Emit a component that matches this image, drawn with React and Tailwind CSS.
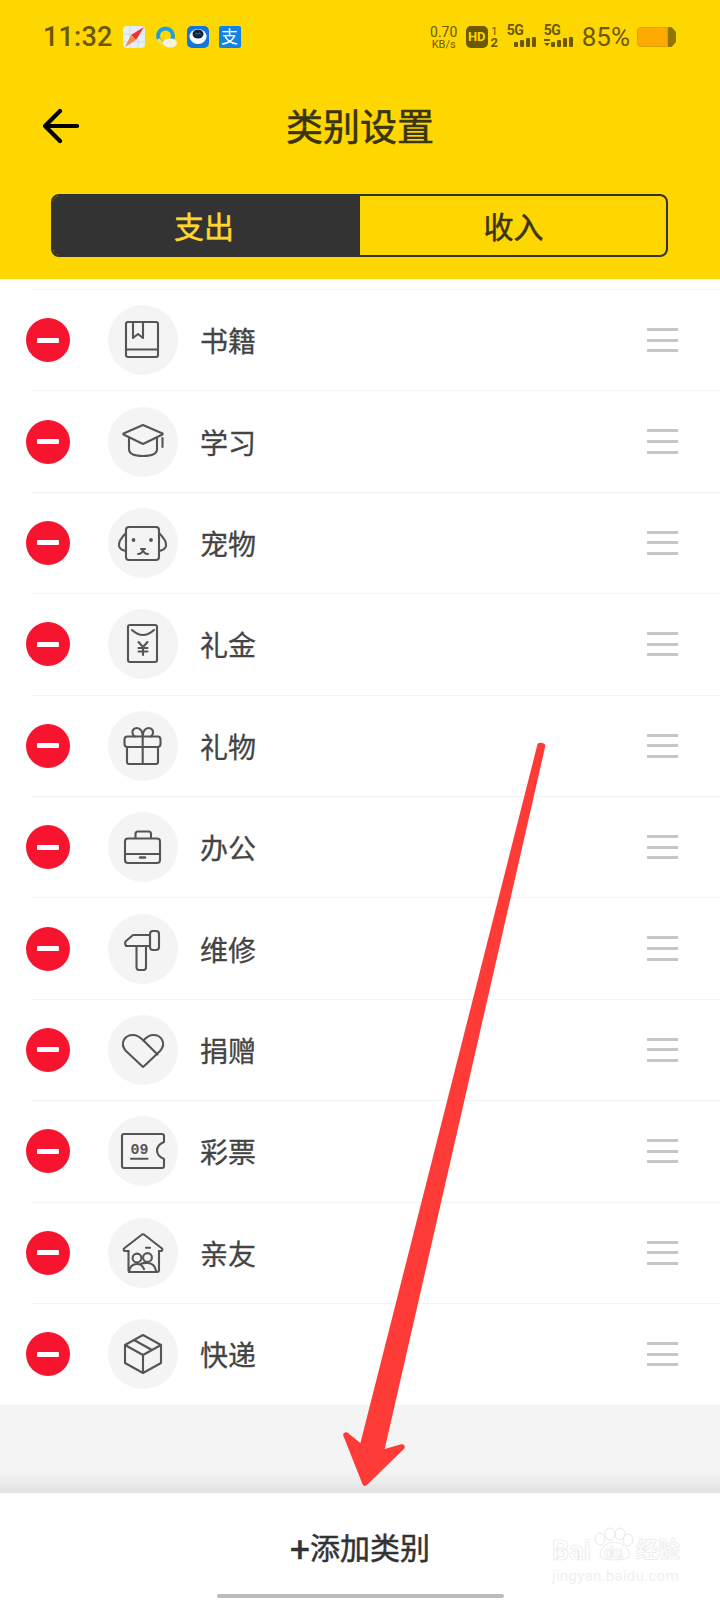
const FONT = "font-['Roboto','Noto_Sans_CJK_SC',sans-serif]";

const icons = {
  book: (
    <>
      <rect x="18" y="17" width="32" height="35" rx="2" />
      <path d="M18 44.5H50M25 17V33L30 29L35 33V17" />
    </>
  ),
  cap: (
    <>
      <path d="M35 18L15.5 26.5Q15 27 15.5 27.5L35 37L54.5 27.5Q55 27 54.5 26.5Z" />
      <path d="M21 31V42Q21 49 35 49Q49 49 49 42V31M54.5 31V40" />
    </>
  ),
  dog: (
    <>
      <rect x="18" y="19" width="33" height="33" rx="3" />
      <path d="M18 25Q10 33 11 38Q12 42 18 43M51 25Q59 33 58 38Q57 42 51 43" />
      <path d="M30 46Q34 46 35 42Q36 46 40 46" />
      <path d="M33 41H37" />
      <circle cx="25.5" cy="32" r="1.9" fill="#555" stroke="none" />
      <circle cx="43" cy="32" r="1.9" fill="#555" stroke="none" />
    </>
  ),
  packet: (
    <>
      <rect x="20" y="16" width="29" height="37" rx="2" />
      <path d="M24 21Q35 31 46 21" />
      <path d="M30.5 33L35 38L39.5 33M35 38V46M30.5 39H39.5M30.5 42.5H39.5" />
    </>
  ),
  gift: (
    <>
      <rect x="16.5" y="25.5" width="36" height="10.5" rx="3" />
      <path d="M19 36V51Q19 53 21 53H48Q50 53 50 51V36M34.7 25.5V53" />
      <path d="M34.7 25.5C34.7 20 32 17 29 17C25.5 17 24 20 24.5 22C25 24 26 25.5 27 25.5M34.7 25.5C34.7 20 37.5 17 40.5 17C44 17 45.5 20 45 22C44.5 24 43.5 25.5 42.5 25.5" />
    </>
  ),
  case: (
    <>
      <rect x="17" y="26.5" width="35" height="24.5" rx="3" />
      <path d="M27.5 26V22Q27.5 19.5 30 19.5H40.5Q43 19.5 43 22V26M17 42H52" />
      <path d="M32 45.5H37" strokeWidth="2.4" />
    </>
  ),
  hammer: (
    <>
      <path d="M42 21H25L17.5 27.5Q16.5 29 18 32H42Z" />
      <rect x="42" y="17" width="9" height="19" rx="3" />
      <path d="M28.5 32V53Q28.5 56 31 56H35.5Q38 56 38 53V32" />
    </>
  ),
  heart: (
    <>
      <path d="M35 52L18 36C11 28 17 20 25 20C30 20 33 23 35.5 25.5C38 22.5 41 20 45.5 20C53 20 59 28 52 36L41 46.5Q37.5 50 35 52Z" />
      <path d="M35.5 25.5L49.5 39.5" />
    </>
  ),
  ticket: (
    <>
      <path d="M16 18H54Q56 18 56 20V26Q49 29 49 34.5Q49 40 56 43V50Q56 52 54 52H16Q14 52 14 50V20Q14 18 16 18Z" />
      <path d="M23 42.8H39.5" />
      <text x="22.5" y="38" fill="#555" stroke="none" fontSize="15" fontWeight="700" fontFamily="'Liberation Mono', monospace">09</text>
    </>
  ),
  house: (
    <>
      <path d="M20.5 33V52Q20.5 54 22.5 54H49Q51 54 51 52V33" />
      <path d="M20.5 33H16.5Q15 32 16 30.5L34 16.5Q35 16 36 16.5L54 30.5Q55 32 53.5 33H51" />
      <path d="M38 29.7H42" />
      <circle cx="29" cy="40" r="4.4" />
      <circle cx="39.5" cy="39.5" r="4.4" />
      <path d="M21 54Q22 46 29 46Q34 46 36 51M33 46Q36 44.5 39.5 45Q47 45.5 48 53" />
    </>
  ),
  box: (
    <>
      <path d="M35 16L53 26V44L35 54L17 44V26Z" />
      <path d="M17 26L35 36L53 26M35 36V54M26 21L44 31" />
    </>
  ),
};

const rows = [
  ["书籍", "book"],
  ["学习", "cap"],
  ["宠物", "dog"],
  ["礼金", "packet"],
  ["礼物", "gift"],
  ["办公", "case"],
  ["维修", "hammer"],
  ["捐赠", "heart"],
  ["彩票", "ticket"],
  ["亲友", "house"],
  ["快递", "box"],
];

function Signal({ arrows }) {
  return (
    <div className="relative h-[24px] w-[30px]">
      <span className="absolute left-0 top-[-2px] text-[14px] font-bold leading-[14px] tracking-[-0.5px] text-[#6b5800]">5G</span>
      <svg viewBox="0 0 30 24" className="absolute inset-0 h-[24px] w-[30px]" fill="#6b5800">
        {arrows && <path d="M0 14H6V16H0ZM0 18H6L3 21Z" />}
        <rect x="7" y="17" width="4" height="5" rx="1" />
        <rect x="13" y="15" width="4" height="7" rx="1" />
        <rect x="19" y="13" width="4" height="9" rx="1" />
        <rect x="25" y="12" width="4" height="10" rx="1" />
      </svg>
    </div>
  );
}

function AppIcons() {
  return (
    <div className="ml-[10px] flex items-center gap-[10px]">
      <svg viewBox="0 0 22 22" className="h-[22px] w-[22px]">
        <rect width="22" height="22" rx="4" fill="#e6eff5" />
        <path d="M7 0V22M0 8H22M15 0V22M0 16H22" stroke="#cbdde8" strokeWidth="1" />
        <path d="M21 1L8 9L13 14Z" fill="#ee2f35" />
        <path d="M2 21L8 9L13 14Z" fill="#f58a4a" />
      </svg>
      <svg viewBox="0 0 22 22" className="h-[22px] w-[22px]">
        <circle cx="10.5" cy="10" r="7.5" fill="none" stroke="#1e9fe0" strokeWidth="4" />
        <path d="M3 13A8 8 0 0 0 14 17" fill="none" stroke="#f4df50" strokeWidth="4" />
        <ellipse cx="15" cy="17" rx="7" ry="4.5" fill="#f6f4de" />
      </svg>
      <svg viewBox="0 0 22 22" className="h-[22px] w-[22px]">
        <rect width="22" height="22" rx="5" fill="#1275e0" />
        <ellipse cx="11" cy="10.5" rx="8.5" ry="7.5" fill="#ffffff" />
        <ellipse cx="11" cy="8" rx="5.5" ry="4.5" fill="#10243f" />
        <path d="M8.5 8Q9.5 6.5 10.5 8M11.5 8Q12.5 6.5 13.5 8" fill="none" stroke="#4cc4f0" strokeWidth="0.8" />
      </svg>
      <div className="flex h-[22px] w-[22px] items-center justify-center rounded-[2px] bg-[#1282e6] text-[17px] leading-none text-white">支</div>
    </div>
  );
}

function Watermark() {
  return (
    <div className="absolute left-[552px] top-[1520px] h-[64px] w-[130px]">
      <svg viewBox="0 0 130 44" className="absolute left-0 top-0 h-[44px] w-[130px]" fill="none" stroke="#e9e9e9" strokeWidth="1">
        <ellipse cx="48" cy="19" rx="5" ry="6" />
        <ellipse cx="58" cy="14" rx="5" ry="6" />
        <ellipse cx="68" cy="14" rx="5" ry="6" />
        <ellipse cx="76" cy="20" rx="5" ry="6" />
        <path d="M48 34Q50 23 62 22Q74 23 78 34Q78 40 62 40Q47 40 48 34Z" />
      </svg>
      <span className="absolute left-0 top-[16px] text-[27px] font-bold leading-[30px] text-transparent [-webkit-text-stroke:0.7px_#e9e9e9]">Bai</span>
      <span className="absolute left-[52px] top-[22px] text-[17px] font-bold leading-[20px] text-transparent [-webkit-text-stroke:0.7px_#e9e9e9]">du</span>
      <span className="absolute left-[84px] top-[16px] text-[22px] font-bold leading-[28px] text-transparent [-webkit-text-stroke:0.7px_#e9e9e9]">经验</span>
      <span className="absolute left-0 top-[48px] text-[15px] leading-[16px] tracking-[0.3px] text-[#f0f0f0]">jingyan.baidu.com</span>
    </div>
  );
}

export default function App() {
  return (
    <div className={`relative h-[1600px] w-[720px] overflow-hidden bg-white ${FONT}`}>
      <div className="h-[279px] bg-[#ffd700]">
        {/* status bar */}
        <div className="flex h-[74px] items-center justify-between pl-[43px] pr-[44px]">
          <div className="flex items-center">
            <span className="text-[27px] font-medium leading-none tracking-[0.2px] text-[#6b5800]">11:32</span>
            <AppIcons />
          </div>
          <div className="flex items-center text-[#6b5800]">
            <div className="flex w-[30px] flex-col items-center">
              <span className="text-[14px] leading-[14px]">0.70</span>
              <span className="text-[11px] leading-[11px]">KB/s</span>
            </div>
            <div className="ml-[7px] flex h-[22px] w-[22px] items-center justify-center rounded-[5px] bg-[#6b5800] text-[13px] font-bold text-[#ffd700]">HD</div>
            <div className="ml-[2px] flex w-[9px] flex-col items-center text-[11px] font-bold leading-[11px]">
              <span className="font-normal">1</span>
              <span className="text-[13px]">2</span>
            </div>
            <div className="ml-[8px]">
              <Signal />
            </div>
            <div className="ml-[7px]">
              <Signal arrows />
            </div>
            <span className="ml-[8px] text-[26px] leading-none">85%</span>
            <div className="ml-[7px] flex items-center">
              <div className="h-[20px] w-[31px] rounded-l-[4px] rounded-r-[1px] border border-[#d9a400] bg-[#ffaa00]" />
              <div className="h-[20px] w-[8px] rounded-r-[4px] bg-[#8f7600] [clip-path:polygon(0_0,45%_0,100%_25%,100%_75%,45%_100%,0_100%)]" />
            </div>
          </div>
        </div>

        {/* title */}
        <div className="relative flex h-[102px] items-center justify-center">
          <svg viewBox="0 0 36 36" className="absolute left-[43px] top-[34px] h-[36px] w-[36px]" fill="none" stroke="#000000" strokeWidth="4.2" strokeLinecap="round" strokeLinejoin="round">
            <path d="M17 3L2 18L17 33M2 18H34" />
          </svg>
          <h1 className="mt-[6px] text-[37px] font-normal leading-none text-[#3a3413] [-webkit-text-stroke:0.6px_#3a3413]">类别设置</h1>
        </div>

        {/* tabs */}
        <div className="ml-[51px] mt-[18px] flex h-[63px] w-[617px] overflow-hidden rounded-[8px] border-2 border-[#333333]">
          <div className="flex w-[307px] items-center justify-center bg-[#333333] pr-[5px] pt-[4px] text-[30px] leading-none text-[#ffd52e] [-webkit-text-stroke:0.5px_#ffd52e]">支出</div>
          <div className="flex flex-1 items-center justify-center pl-[1px] pt-[4px] text-[30px] leading-none text-[#3a3413] [-webkit-text-stroke:0.5px_#3a3413]">收入</div>
        </div>
      </div>

      {/* list */}
      <div className="h-[10px]" />
      {rows.map(([label, icon]) => (
        <div key={label}>
          <div className="ml-[32px] h-px bg-[#f3f3f3]" />
          <div className="flex h-[100.4px] items-center pl-[26px] pr-[42px]">
            <div className="flex h-[44px] w-[44px] items-center justify-center rounded-full bg-[#f6142f]">
              <div className="h-[5px] w-[22px] rounded-[1px] bg-white" />
            </div>
            <div className="ml-[38px] h-[70px] w-[70px] rounded-full bg-[#f4f4f4]">
              <svg viewBox="0 0 70 70" className="h-[70px] w-[70px]" fill="none" stroke="#555555" strokeWidth="2.1" strokeLinecap="round" strokeLinejoin="round">
                {icons[icon]}
              </svg>
            </div>
            <span className="ml-[22px] mt-[6px] text-[28px] leading-none text-[#444444] [-webkit-text-stroke:0.3px_#444444]">{label}</span>
            <div className="ml-auto flex w-[31px] flex-col gap-[7.6px]">
              <div className="h-[3px] bg-[#c6c6c6]" />
              <div className="h-[3px] bg-[#c6c6c6]" />
              <div className="h-[3px] bg-[#c6c6c6]" />
            </div>
          </div>
        </div>
      ))}

      <div className="h-px" />
      <div className="h-[88px] bg-linear-to-b from-[#f4f4f4] via-[#f4f4f4] via-75% to-[#e2e2e2]" />

      {/* bottom bar */}
      <div className="flex h-[105px] flex-col items-center">
        <span className="mt-[42px] flex items-center text-[30px] leading-[28px] text-[#333333] [-webkit-text-stroke:0.5px_#333333]">
          <span className="translate-y-[1px] text-[35px]">+</span>
          <span>添加类别</span>
        </span>
        <div className="mt-[31px] h-[4px] w-[287px] shrink-0 rounded-full bg-[#bbbbbb]" />
      </div>

      <Watermark />

      {/* annotation arrow */}
      <svg viewBox="0 0 720 1600" className="pointer-events-none absolute left-0 top-0 h-[1600px] w-[720px]">
        <path
          d="M540 745.5L542.5 746L381 1453L402 1447L365 1483L346 1435L362 1448Z"
          fill="#ff3b38"
          stroke="#ff3b38"
          strokeWidth="5.5"
          strokeLinejoin="round"
        />
      </svg>
    </div>
  );
}
